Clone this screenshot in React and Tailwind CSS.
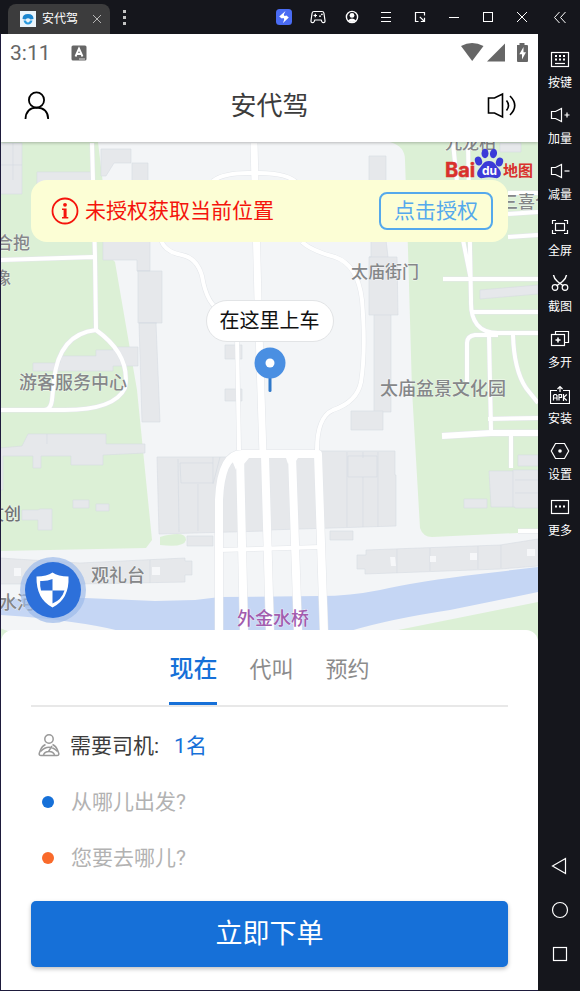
import React from "react";

const SvgIcon = ({ children, size = 20, className = "" }) => (
  <svg
    width={size}
    height={size}
    viewBox="0 0 20 20"
    fill="none"
    stroke="currentColor"
    strokeWidth="1.2"
    className={className}
    aria-hidden="true"
  >
    {children}
  </svg>
);

const windowActions = [
  {
    label: "加速",
    icon: (
      <SvgIcon>
        <rect x="2" y="2" width="16" height="16" rx="3.5" fill="#4a6cf3" stroke="none" />
        <path d="M11.5 4 L5.2 9.6 L7.8 11.4 L11 10.6 L9.8 7.6 Z M9 16 L14.8 10.4 L12.4 8.6 L9 9.6 L10.2 12.4 Z" fill="#fff" stroke="none" />
      </SvgIcon>
    ),
  },
  {
    label: "手柄",
    icon: (
      <SvgIcon>
        <path d="M6 4.5 H14 Q15.6 4.5 15.9 6 L17 13.5 Q17.2 15.6 15.5 15.6 Q14.4 15.6 13.8 14.4 L13.2 13 H6.8 L6.2 14.4 Q5.6 15.6 4.5 15.6 Q2.8 15.6 3 13.5 L4.1 6 Q4.4 4.5 6 4.5 Z" />
        <path d="M5.6 8.5 H9 M7.3 6.8 V10.2" />
        <circle cx="12" cy="9.2" r="0.9" fill="currentColor" stroke="none" />
        <circle cx="13.9" cy="7.3" r="0.9" fill="currentColor" stroke="none" />
      </SvgIcon>
    ),
  },
  {
    label: "账号",
    icon: (
      <SvgIcon>
        <circle cx="10" cy="10" r="5.6" strokeWidth="1.4" />
        <circle cx="10" cy="8.4" r="2.4" fill="currentColor" stroke="none" />
        <path d="M6 13.4 Q10 9.6 14 13.4 Q10 16.8 6 13.4 Z" fill="currentColor" stroke="none" />
      </SvgIcon>
    ),
  },
  { label: "菜单", icon: <SvgIcon><path d="M5 5.5 H15 M5 10.5 H15 M5 14.5 H15" strokeWidth="1" /></SvgIcon> },
  {
    label: "缩放",
    icon: (
      <SvgIcon>
        <path d="M8.5 14.5 H5.5 V5.5 H14.5 V8.5" />
        <path d="M9.8 9.8 L14 14 M14.5 10.8 V14.5 H10.8" />
      </SvgIcon>
    ),
  },
  { label: "最小化", icon: <SvgIcon><path d="M5 10.5 H15" strokeWidth="1" /></SvgIcon> },
  { label: "最大化", icon: <SvgIcon><rect x="5.5" y="5.5" width="9" height="9" strokeWidth="1" /></SvgIcon> },
  { label: "关闭", icon: <SvgIcon><path d="M5 5 L15 15 M15 5 L5 15" strokeWidth="1" /></SvgIcon> },
];

const Speaker = ({ plus }) => (
  <SvgIcon>
    <path d="M1.5 6.5 H5.5 L11.5 3.5 V16.5 L5.5 13.5 H1.5 Z" />
    <path d={plus ? "M14.5 10 H19.5 M17 7.5 V12.5" : "M14.5 10 H19.5"} />
  </SvgIcon>
);

const tools = [
  {
    label: "按键",
    icon: (
      <SvgIcon>
        <rect x="1.5" y="3.5" width="17" height="14" />
        <path d="M5 7 H7 M9 7 H11 M13 7 H15 M5 10.5 H7 M9 10.5 H11 M13 10.5 H15" strokeWidth="1.8" />
        <path d="M5 14.5 H15" />
      </SvgIcon>
    ),
  },
  { label: "加量", icon: <Speaker plus /> },
  { label: "减量", icon: <Speaker /> },
  {
    label: "全屏",
    icon: (
      <SvgIcon>
        <path d="M2.5 7 V3.5 H6 M14 3.5 H17.5 V7 M17.5 13 V16.5 H14 M6 16.5 H2.5 V13" />
        <rect x="5.5" y="6.5" width="9" height="7" />
      </SvgIcon>
    ),
  },
  {
    label: "截图",
    icon: (
      <SvgIcon>
        <path d="M3.5 2 Q4 5.5 7.5 8.5 L13.5 13 M16.5 2 Q16 5.5 12.5 8.5 L6.5 13" strokeWidth="1.5" />
        <circle cx="5" cy="14.5" r="2.8" />
        <circle cx="15" cy="14.5" r="2.8" />
      </SvgIcon>
    ),
  },
  {
    label: "多开",
    icon: (
      <SvgIcon>
        <path d="M5.5 5.5 V2.5 H18.5 V13.5 H15" />
        <rect x="1.5" y="5.5" width="13" height="11" />
        <path d="M5.5 11 H10.5 M8 8.5 V13.5" strokeWidth="1.6" />
      </SvgIcon>
    ),
  },
  {
    label: "安装",
    icon: (
      <SvgIcon>
        <path d="M7 5.5 H0.5 V18.5 H19.5 V5.5 H13 M10 7 V1.5 M7.5 4 L10 1.5 L12.5 4" />
        <path d="M3.5 15.5 V10.5 L4.5 9.5 H6 L7 10.5 V15.5 M3.5 13 H7 M9 15.5 V9.5 H11.5 V12.5 H9 M13.5 9 V16 M16.8 9.5 L13.5 12.5 L16.8 15.5" />
      </SvgIcon>
    ),
  },
  {
    label: "设置",
    icon: (
      <SvgIcon>
        <path d="M5.5 2.5 H14.5 L18.7 10 L14.5 17.5 H5.5 L1.3 10 Z" />
        <circle cx="10" cy="10" r="1.8" fill="currentColor" stroke="none" />
      </SvgIcon>
    ),
  },
  {
    label: "更多",
    icon: (
      <SvgIcon>
        <rect x="1.5" y="3.5" width="17" height="13" />
        <path d="M5 9.5 H7 M9 9.5 H11 M13 9.5 H15" strokeWidth="1.8" />
      </SvgIcon>
    ),
  },
];

const navKeys = [
  { label: "返回", icon: <SvgIcon><path d="M2.5 10 L15.5 2.5 V17.5 Z" /></SvgIcon> },
  { label: "主页", icon: <SvgIcon><circle cx="10" cy="10" r="7.5" /></SvgIcon> },
  { label: "最近任务", icon: <SvgIcon><rect x="3.5" y="3.5" width="13" height="13" /></SvgIcon> },
];

function TitleBar() {
  return (
    <header className="flex h-[34px] items-center text-white">
      <div className="ml-2 mt-1 flex h-[30px] w-[102px] items-center rounded-t-lg bg-[#3c3c3d] pl-3">
        <svg width="16" height="16" viewBox="0 0 16 16" aria-hidden="true">
          <rect width="16" height="16" fill="#eaf4fb" />
          <path d="M2.5 8 Q2.5 3 8 3 Q13.5 3 13.5 8 L10.5 8.5 Q8 6 5.5 8.5 Z" fill="#1b86cf" />
          <path d="M3.5 9.5 L6 9.5 Q6.5 11.5 8 11.5 Q9.5 11.5 10 9.5 L12.5 9.5 Q11.5 13.5 8 13.5 Q4.5 13.5 3.5 9.5 Z" fill="#2a9be0" />
        </svg>
        <span className="ml-[6px] text-xs leading-4">安代驾</span>
        <button aria-label="关闭标签" className="ml-auto mr-[7px] text-[#b5b5b5]">
          <svg width="12" height="12" viewBox="0 0 12 12" stroke="currentColor" aria-hidden="true">
            <path d="M2 2 L10 10 M10 2 L2 10" />
          </svg>
        </button>
      </div>
      <button aria-label="更多标签" className="ml-2">
        <svg width="12" height="20" viewBox="0 0 12 20" fill="#c4c4c4" aria-hidden="true">
          <rect x="5" y="3" width="3" height="3" />
          <rect x="5" y="9" width="3" height="3" />
          <rect x="5" y="15" width="3" height="3" />
        </svg>
      </button>
      <div className="ml-auto flex">
        {windowActions.map((a) => (
          <button key={a.label} aria-label={a.label} className="flex w-[34px] justify-center">
            {a.icon}
          </button>
        ))}
      </div>
      <button aria-label="收起" className="flex w-[41px] justify-center">
        <SvgIcon>
          <path d="M9.5 5 L4.5 10.5 L9.5 16 M15.5 5 L10.5 10.5 L15.5 16" strokeWidth="1" />
        </SvgIcon>
      </button>
    </header>
  );
}

function Sidebar() {
  return (
    <aside className="z-10 flex w-[42px] shrink-0 flex-col items-center bg-[#15161c] pt-[15px] pb-[27px] pl-[2px] text-white">
      <div className="flex flex-col gap-[14px]">
        {tools.map((t) => (
          <button key={t.label} className="flex flex-col items-center gap-[6px] text-xs leading-4">
            {t.icon}
            <span>{t.label}</span>
          </button>
        ))}
      </div>
      <div className="mt-auto flex flex-col gap-6">
        {navKeys.map((n) => (
          <button key={n.label} aria-label={n.label}>
            {n.icon}
          </button>
        ))}
      </div>
    </aside>
  );
}

function StatusBar() {
  return (
    <div className="flex h-9 items-center px-[9px] pt-px text-[#666]">
      <span className="text-[21px] leading-6">3:11</span>
      <svg className="ml-5" width="16" height="16" viewBox="0 0 16 16" aria-hidden="true">
        <rect x="0.5" y="0.5" width="15" height="15" rx="1.5" fill="#666" />
        <path d="M4.5 11.5 L8 3.5 L11.5 11.5 M5.8 9 H10.2" stroke="#fff" strokeWidth="1.9" fill="none" />
        <path d="M8 14 H14" stroke="#fff" strokeWidth="0.8" />
      </svg>
      <svg className="ml-auto" width="70" height="20" viewBox="0 0 70 20" fill="#666" aria-hidden="true">
        <path d="M2 3 Q13 -3 24.5 3 L13.2 18 Z" />
        <path d="M28 18.5 L46 0.5 V18.5 Z" />
        <path d="M58 2 H60.5 V0 H65.5 V2 H68 Q69 2 69 3 V18 Q69 19 68 19 H59 Q58 19 58 18 Z" />
        <path d="M64.5 4 L60.3 11.3 H63 V16.5 L67 9.3 H64.5 Z" fill="#fff" />
      </svg>
    </div>
  );
}

function AppHeader() {
  return (
    <div className="relative z-10 bg-white shadow-[0_1px_3px_rgba(0,0,0,0.25)]">
      <StatusBar />
      <div className="flex h-[72px] items-center justify-between px-5">
        <button aria-label="个人中心" className="text-black">
          <svg width="32" height="32" viewBox="0 0 32 32" fill="none" stroke="currentColor" strokeWidth="1.8" aria-hidden="true">
            <circle cx="15.5" cy="10" r="7.6" />
            <path d="M4.5 29 Q5 17.8 15.5 17.6 Q27 17.8 27.2 29" />
          </svg>
        </button>
        <h1 className="text-[26px] leading-9 text-[#3c3c3c]">安代驾</h1>
        <button aria-label="语音播报" className="text-black">
          <svg width="32" height="32" viewBox="0 0 32 32" fill="none" stroke="currentColor" strokeWidth="1.6" aria-hidden="true">
            <path d="M2.5 8 H8.5 L16.5 4 V27 L8.5 23 H2.5 Z" />
            <path d="M20.5 10.5 Q24.5 15.5 20.5 20.5 M24 6 Q33.5 15.5 24 25" />
          </svg>
        </button>
      </div>
    </div>
  );
}

const buildings = [
  "M0 143 H22 V194 H0 Z",
  "M37 172 H92 V184 H37 Z",
  "M101 149 H131 V163 H114 L106 176 L101 176 Z",
  "M132 163 H148 V184 H132 Z",
  "M103 240 H150 V271 H137 V260 H103 Z",
  "M138 271 H162 V323 H138 Z",
  "M139 323 H156 L160 422 H142 Z",
  "M60 356 H96 V350 H113 V347 H138 V366 H113 V371 H33 V363 H60 Z",
  "M0 448 L22 446 L28 434 H106 V444 H145 V453 L103 455 V465 H71 V456 H41 V468 H33 V456 H3 V490 H0 Z",
  "M73 500 H89 V508 H73 Z",
  "M96 504 H109 V511 H96 Z",
  "M22 510 H38 L40 509 H52 V530 H38 V520 H22 Z",
  "M157 457 H266 V531 L159 534 Z",
  "M187 536 H213 V546 H187 Z",
  "M225 345 H242 V359 H225 Z",
  "M225 389 H242 V401 H225 Z",
  "M0 558 L80 563 L185 558 V561 H192 V575 H185 V582 L80 584 H0 Z",
  "M369 156 H386 V184 H369 Z",
  "M371 240 H386 L388 257 H397 L398 315 H391 V412 H374 V315 H369 V257 H371 Z",
  "M351 411 H383 V430 H351 Z",
  "M268 451 H395 V475 H396 V526 L268 530 Z",
  "M330 531 H353 V540 H330 Z",
  "M357 555 H366 L366 550 L500 545 L538 539 V566 L500 569 L365 574 V569 H357 Z",
  "M489 471 H513 V470 H538 V508 H515 V507 H491 Z",
  "M464 499 H487 V508 H464 Z",
  "M518 455 H538 V466 H518 Z",
  "M480 290 L538 285 V294 L480 299 Z",
  "M500 143 H521 V152 H500 Z",
];

const outlines = [
  "M178 459 L179 532 M198 484 V531 M180 463 H213 V483 H181 Z M213 457 V463 M220 457 L213 484",
  "M347 452 V527 M363 452 V458 M378 452 V527 M348 456 H377 V477 H348 Z M363 477 V527",
  "M369 257 H388 M374 315 H391 M139 323 H157 M137 271 H150 M47 434 V444 M13 143 V180 M0 165 H22",
  "M150 560 V583 M397 549 V573 M430 548 V571 M478 546 V569 M501 545 V568 M513 471 V507 M515 480 H538 M515 493 H538",
];

const roads = [
  { w: 4, d: "M92 143 L95 257 L96 330 Q59 334 54 380 L52 400 Q51 410 44 410 M0 410 H60 Q114 411 125 388 Q131 355 96 330 M0 260 L93 257" },
  { w: 7, d: "M254 143 L258 300 L263 455" },
  { w: 4, d: "M213 181 Q224 172 254 173 Q288 172 298 184" },
  { w: 4, d: "M161 240 Q165 252 182 255 Q197 258 202 276 Q207 306 222 311 M237 336 L239 450" },
  { w: 4, d: "M302 242 Q312 251 335 257 Q358 265 362 300 Q366 350 361 382 Q357 402 333 410 Q317 417 317 450" },
  { w: 8, d: "M219 632 L219 500 Q221 454 242 454 H318 L324 632 M240 455 L244 632 M265 455 L270 632 M292 455 L298 632" },
  { w: 4, d: "M219 550 L320 547" },
  { w: 4, d: "M453 143 L463 240 L471 280 M468 143 L471 300 Q470 333 498 333 H538 M471 312 H538 M508 193 H538 M508 214 L538 212 M508 237 L538 235" },
  { w: 4, d: "M443 279 H538 M467 382 V343 Q467 336 475 335 H498 M489 335 L491 430 M513 335 Q514 370 526 388 L538 403 M488 419 L538 418 M511 434 V468 M518 531 H538" },
  { w: 6, d: "M442 436 L491 433 H538" },
];

function BaiduMark() {
  return (
    <g>
      <text x="445" y="177" fontSize="20" fontWeight="700" fill="#d9312d" stroke="#d9312d" strokeWidth="0.5" fontFamily="Inter, sans-serif">Bai</text>
      <g fill="#3b3bd8">
        <ellipse cx="478.5" cy="161" rx="3.5" ry="4.5" transform="rotate(-20 478.5 161)" />
        <ellipse cx="485" cy="153.5" rx="3.5" ry="4.7" />
        <ellipse cx="493.5" cy="153.5" rx="3.5" ry="4.7" transform="rotate(12 493.5 153.5)" />
        <ellipse cx="499.5" cy="162" rx="3.5" ry="4.5" transform="rotate(20 499.5 162)" />
        <path d="M489 161 C495 161 496 166 499 169 C503 174 500 179 495 178 C491 177 487 177 483 178 C478 179 475 174 479 169 C482 166 483 161 489 161 Z" />
      </g>
      <text x="482" y="175" fontSize="12" fontWeight="700" fill="#fff" fontFamily="Inter, sans-serif">du</text>
      <text x="503" y="176" fontSize="15" fontWeight="700" fill="#d9312d">地图</text>
    </g>
  );
}

function MapCanvas() {
  return (
    <svg className="absolute inset-0 h-full w-full" viewBox="1 142 537 500" preserveAspectRatio="xMidYMin slice" role="img" aria-label="地图">
      <rect x="0" y="142" width="540" height="510" fill="#f3f5f7" />
      <g fill="#dcf0d6">
        <path d="M0 142 H98 L103 184 V250 L115 262 L137 390 L152 540 L146 548 L0 551 Z" />
        <path d="M390 142 Q405 146 405 160 L408 250 L412 390 L420 528 Q423 537 432 537 L538 532 V142 Z" />
        <path d="M393 631 L538 602 V652 H393 Z" />
        <path d="M160 537 Q186 530 186 540 Q184 548 160 545 Z" />
        <path d="M0 628 L20 636 L0 650 Z" />
      </g>
      <path d="M0 599 L85 598 L155 601 L195 600 L220 597 L320 596 Q350 596 380 590 Q420 581 480 574 L538 567 V592 L450 610 Q390 619 350 631 H120 Q75 620 0 615 Z" fill="#c5d6f4" />
      <g fill="#e6e8eb" stroke="#d6dbe3" strokeWidth="0.6">
        {buildings.map((d) => <path key={d} d={d} />)}
      </g>
      <g fill="none" stroke="#d6dbe3" strokeWidth="0.7">
        {outlines.map((d) => <path key={d} d={d} />)}
      </g>
      <g fill="#f6f7f9">
        <path d="M390 557 H395 L396 566 H391 Z M430 556 H436 V562 H430 Z M470 553 H477 V560 H470 Z M527 549 H535 V556 H527 Z M152 567 H160 V575 H152 Z M14 568 H21 V576 H14 Z" />
      </g>
      <g fill="none" stroke="#e3e6ea" strokeLinejoin="round">
        {roads.map((r) => <path key={r.d} d={r.d} strokeWidth={r.w + 1} />)}
      </g>
      <g fill="none" stroke="#fff" strokeLinejoin="round">
        {roads.map((r) => <path key={r.d} d={r.d} strokeWidth={r.w} />)}
      </g>
      <g fill="#fff">
        <path d="M231 458 H249 L244 464 L245 470 L244 463 L240 459 L236 470 Z" />
        <path d="M286 458 H298 L294 464 L292 459 L288 464 Z" />
      </g>
      <g fill="#858789" stroke="#fff" strokeWidth="1" strokeOpacity="0.6" paintOrder="stroke" fontSize="17" fontWeight="500">
        <text x="445" y="149">九龙柏</text>
        <text x="501" y="208">三喜仓</text>
        <text x="-4" y="249">合抱</text>
        <text x="-6" y="284">像</text>
        <text x="351" y="278">太庙街门</text>
        <text x="380" y="395" fontSize="18">太庙盆景文化园</text>
        <text x="19" y="389" fontSize="18">游客服务中心</text>
        <text x="-13" y="520" fill="#707274">文创</text>
        <text x="91" y="582" fontSize="18">观礼台</text>
        <text x="-1" y="609" fontSize="18">水河</text>
        <text x="237" y="625" fontSize="18" fill="#a25cae">外金水桥</text>
      </g>
      <BaiduMark />
    </svg>
  );
}

function MapSection() {
  return (
    <section className="relative min-h-[320px] flex-1">
      <MapCanvas />
      <div className="relative px-[30px] pt-[38px]">
        <div className="flex h-[62px] items-center justify-between rounded-2xl bg-[#fcfed5] pl-5 pr-[15px]" role="alert">
          <p className="flex items-center gap-[6px] text-[21px] leading-7 text-[#f5140c]">
            <svg width="28" height="28" viewBox="0 0 28 28" fill="none" stroke="currentColor" aria-hidden="true">
              <circle cx="14" cy="14" r="12.5" strokeWidth="1.8" />
              <circle cx="14" cy="7.8" r="1.9" fill="currentColor" stroke="none" />
              <path d="M11 11.6 H15.6 V20 H17.3 V21.5 H11 V20 H12.6 V13.1 H11 Z" fill="currentColor" stroke="none" />
            </svg>
            未授权获取当前位置
          </p>
          <button className="h-[38px] rounded-lg border-2 border-[#55a9ec] px-[13px] text-[21px] leading-7 text-[#55a9ec]">
            点击授权
          </button>
        </div>
      </div>
      <div className="absolute inset-x-0 top-[158px] flex flex-col items-center">
        <div className="flex h-[42px] items-center rounded-full border border-[#e2e4e6] bg-white px-[13px] text-xl leading-7 text-[#111]">
          在这里上车
        </div>
        <svg className="mt-1" width="34" height="48" viewBox="0 0 34 48" aria-hidden="true">
          <rect x="15.5" y="28" width="3" height="18" rx="1.5" fill="#2f78c9" />
          <circle cx="17" cy="17" r="15.5" fill="#4a8fe2" />
          <circle cx="17" cy="17" r="4.5" fill="#fff" />
        </svg>
      </div>
      <button aria-label="安全中心" className="absolute bottom-[18px] left-[18px] h-[68px] w-[68px]">
        <svg viewBox="0 0 68 68" aria-hidden="true">
          <circle cx="34" cy="34" r="33" fill="#9dbbe9" fillOpacity="0.7" />
          <circle cx="34" cy="34" r="28" fill="#2d70da" />
          <path d="M33.5 16.5 Q39 20.5 49.5 20.5 Q50.5 43 33.5 51.5 Q17 43 17.5 20.5 Q28 20.5 33.5 16.5 Z" fill="#fff" />
          <path d="M33.5 23 V34.5 H22 Q20.8 30 21.2 25 Q28 25.5 33.5 23 Z M33.5 34.5 H45.5 Q42.5 44 33.5 47.5 Z" fill="#2d70da" />
        </svg>
      </button>
    </section>
  );
}

function AddressField({ id, label, color, placeholder }) {
  return (
    <div className="flex h-14 items-center">
      <span className={`ml-[11px] h-3 w-3 shrink-0 rounded-full ${color}`} />
      <label htmlFor={id} className="sr-only">{label}</label>
      <input
        id={id}
        placeholder={placeholder}
        className="ml-[17px] min-w-0 flex-1 bg-transparent text-[21px] leading-7 outline-none placeholder:text-[#b2b2b2]"
      />
    </div>
  );
}

function BookingSheet() {
  return (
    <section className="relative -mt-3 rounded-t-xl bg-white px-[30px] pb-[23px]">
      <div className="flex h-[77px] justify-center gap-8 border-b-2 border-[#e8e8e8]" role="tablist">
        <button role="tab" aria-selected="true" className="border-b-[3px] border-[#1670d8] pt-[6px] text-2xl font-medium text-[#1670d8]">
          现在
        </button>
        <button role="tab" aria-selected="false" className="pt-1 text-[22px] text-[#8c8c8c]">代叫</button>
        <button role="tab" aria-selected="false" className="pt-1 text-[22px] text-[#8c8c8c]">预约</button>
      </div>
      <div className="mt-[11px] flex h-14 items-center text-[21px] leading-7 text-[#3c3c3c]">
        <svg className="ml-[7px] shrink-0" width="22" height="24" viewBox="0 0 22 24" fill="none" stroke="#999" strokeWidth="1.5" aria-hidden="true">
          <circle cx="11" cy="5" r="4.2" />
          <path d="M7.5 10.5 Q4 12 2.5 16 L1.2 19.5 Q1 21.5 3 21.5 H19 Q21 21.5 20.8 19.5 L19.5 16 Q18 12 14.5 10.5" />
          <path d="M2.5 17.5 Q11 9 19.5 17.5 M5.5 21 Q6.5 17.5 11 17.5 Q15.5 17.5 16.5 21 M10.5 17.5 L14 12" />
        </svg>
        <span className="ml-[10px]">需要司机:</span>
        <span className="ml-[15px] text-[#1670d8]">1名</span>
      </div>
      <AddressField id="from" label="出发地" color="bg-[#1670d8]" placeholder="从哪儿出发?" />
      <AddressField id="to" label="目的地" color="bg-[#f96a2b]" placeholder="您要去哪儿?" />
      <button className="mt-[15px] h-[66px] w-full rounded-[5px] bg-[#1670d8] text-[27px] text-white shadow-[0_2px_4px_rgba(0,0,0,0.25)]">
        立即下单
      </button>
    </section>
  );
}

export default function App() {
  return (
    <div className="flex min-h-screen flex-col bg-[#15161c] font-[Roboto,'Noto_Sans_CJK_SC',sans-serif]">
      <TitleBar />
      <div className="flex flex-1">
        <main className="flex min-w-0 flex-1 flex-col overflow-hidden border-b border-l border-[#1e1b3c] bg-white">
          <AppHeader />
          <MapSection />
          <BookingSheet />
        </main>
        <Sidebar />
      </div>
    </div>
  );
}
